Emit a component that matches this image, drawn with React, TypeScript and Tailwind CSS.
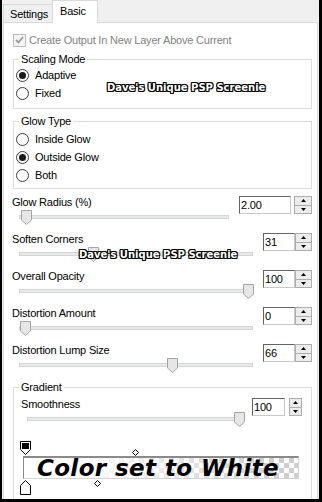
import React from "react";

const WM =
  "absolute font-['DejaVu_Sans',sans-serif] font-bold text-[10px] leading-[12px] tracking-normal text-white whitespace-nowrap [text-shadow:1px_0_0_#000,-1px_0_0_#000,0_1px_0_#000,0_-1px_0_#000,1px_1px_0_#000,-1px_-1px_0_#000,1px_-1px_0_#000,-1px_1px_0_#000]";

function Radio({ checked, label }: { checked?: boolean; label: string }) {
  return (
    <div className="flex items-center h-[18px] ml-[2px] gap-[6px]">
      <span className="w-[13px] h-[13px] rounded-full border border-[#3c3c3c] bg-white flex items-center justify-center">
        {checked && <span className="w-[7px] h-[7px] rounded-full bg-[#1a1a1a]" />}
      </span>
      <span>{label}</span>
    </div>
  );
}

function Thumb() {
  return (
    <svg width="11" height="15" viewBox="0 0 11 15">
      <path d="M0.5 0.5H10.5V10L5.5 14.5L0.5 10Z" fill="#e6e6e6" stroke="#a5a5a5" />
    </svg>
  );
}

function SpinBox({
  value,
  boxCls,
  gapCls,
  btnCls,
}: {
  value: string;
  boxCls: string;
  gapCls: string;
  btnCls: string;
}) {
  return (
    <div className="flex h-[18px]">
      <div
        className={`${boxCls} h-full bg-white border border-[#c8c8c8] border-t-[#646464] border-l-[#646464] text-[11px] leading-[16px] pl-[1px]`}
      >
        {value}
      </div>
      <div className={`${gapCls} ${btnCls} h-full flex flex-col border border-[#adadad]`}>
        <div className="flex-1 bg-[#ececec] border-b border-[#adadad] flex items-center justify-center">
          <svg width="5" height="3" viewBox="0 0 5 3">
            <path d="M0 3L2.5 0L5 3Z" fill="#000" />
          </svg>
        </div>
        <div className="flex-1 bg-[#ececec] flex items-center justify-center">
          <svg width="5" height="3" viewBox="0 0 5 3">
            <path d="M0 0L5 0L2.5 3Z" fill="#000" />
          </svg>
        </div>
      </div>
    </div>
  );
}

function SliderRow({
  label,
  value,
  thumb,
  boxCls,
  gapCls,
  btnCls,
  rowCls,
  trackCls,
}: {
  label: string;
  value: string;
  thumb: number;
  boxCls: string;
  gapCls: string;
  btnCls: string;
  rowCls: string;
  trackCls: string;
}) {
  return (
    <div className={`flex h-[37px] ${rowCls}`}>
      <div className="flex-1 flex flex-col">
        <div className="h-[14px] leading-[14px] whitespace-nowrap">{label}</div>
        <div className={`relative mt-[1px] h-[16px] flex flex-col ${trackCls}`}>
          <div className="mt-[5px] h-[4px] bg-[#e7eaea] border border-[#d6d6d6]" />
          <div className="absolute top-0" style={{ left: thumb }}>
            <Thumb />
          </div>
        </div>
      </div>
      <div className="ml-[10px] mt-[1px]">
        <SpinBox value={value} boxCls={boxCls} gapCls={gapCls} btnCls={btnCls} />
      </div>
    </div>
  );
}

export default function App() {
  return (
    <div className="relative w-[322px] h-[502px] bg-black pl-[2px] pr-[3px] pb-[3px] overflow-hidden font-['Liberation_Sans',Arial,sans-serif] text-[11px] tracking-[-0.2px] text-black">
      <div className="h-[499px] bg-[#f0f0f0] flex flex-col">
        {/* tabs */}
        <div className="h-[22px] flex items-end pl-[1px]">
          <div className="h-[18px] w-[50px] border border-b-0 border-[#d9d9d9] bg-[#f0f0f0] pl-[6px] leading-[18px]">
            Settings
          </div>
          <div className="relative z-10 -ml-[1px] -mb-[1px] h-[23px] w-[46px] border border-b-0 border-[#d9d9d9] bg-white pl-[7px] leading-[20px]">
            Basic
          </div>
        </div>
        {/* panel */}
        <div className="flex-1 ml-[1px] mr-[1px] bg-white border border-b-0 border-[#d9d9d9] flex flex-col">
          {/* checkbox */}
          <div className="mt-[9px] h-[16px] flex items-center ml-[9px] gap-[3px] text-[#838383]">
            <span className="w-[13px] h-[13px] border border-[#bcbcbc] bg-[#f4f4f4] flex items-center justify-center">
              <svg width="9" height="8" viewBox="0 0 9 8">
                <path d="M1 4L3.5 6.5L8 1" fill="none" stroke="#9a9a9a" strokeWidth="1.8" />
              </svg>
            </span>
            <span>Create Output In New Layer Above Current</span>
          </div>
          {/* scaling mode */}
          <fieldset className="mt-[4px] ml-[9px] mr-[5px] border border-[#dcdcdc] pt-[0px] pb-[6px]">
            <legend className="ml-[5px] px-[2px] leading-[14px]">Scaling Mode</legend>
            <Radio checked label="Adaptive" />
            <Radio label="Fixed" />
          </fieldset>
          {/* glow type */}
          <fieldset className="mt-[5px] ml-[9px] mr-[5px] border border-[#dcdcdc] pt-[2px] pb-[4px]">
            <legend className="ml-[5px] px-[2px] leading-[14px]">Glow Type</legend>
            <Radio label="Inside Glow" />
            <Radio checked label="Outside Glow" />
            <Radio label="Both" />
          </fieldset>
          {/* sliders */}
          <div className="mt-[6px] flex flex-col">
            <SliderRow
              label="Glow Radius (%)"
              value="2.00"
              thumb={2}
              rowCls="pl-[8px] pr-[5px]"
              trackCls="ml-[7px]"
              boxCls="w-[52px]"
              gapCls="ml-[3px]"
              btnCls="w-[18px]"
            />
            <SliderRow
              label="Soften Corners"
              value="31"
              thumb={69}
              rowCls="pl-[8px] pr-[5px]"
              trackCls="ml-[7px]"
              boxCls="w-[32px]"
              gapCls="ml-[0px]"
              btnCls="w-[17px]"
            />
            <SliderRow
              label="Overall Opacity"
              value="100"
              thumb={224}
              rowCls="pl-[8px] pr-[5px]"
              trackCls="ml-[7px]"
              boxCls="w-[32px]"
              gapCls="ml-[0px]"
              btnCls="w-[17px]"
            />
            <SliderRow
              label="Distortion Amount"
              value="0"
              thumb={1}
              rowCls="pl-[8px] pr-[5px]"
              trackCls="ml-[7px]"
              boxCls="w-[32px]"
              gapCls="ml-[0px]"
              btnCls="w-[17px]"
            />
            <SliderRow
              label="Distortion Lump Size"
              value="66"
              thumb={148}
              rowCls="pl-[8px] pr-[5px]"
              trackCls="ml-[7px]"
              boxCls="w-[32px]"
              gapCls="ml-[0px]"
              btnCls="w-[17px]"
            />
          </div>
          {/* gradient */}
          <fieldset className="flex-1 ml-[9px] mr-[5px] border border-b-0 border-[#dcdcdc] pt-[3px]">
            <legend className="ml-[5px] px-[2px] leading-[14px]">Gradient</legend>
            <SliderRow
              label="Smoothness"
              value="100"
              thumb={207}
              rowCls="pl-[7px] pr-[9px]"
              trackCls="ml-[6px]"
              boxCls="w-[33px]"
              gapCls="ml-[4px]"
              btnCls="w-[13px]"
            />
            <div className="relative ml-[9px] mr-[12px] h-[62px] flex flex-col">
              <div className="mt-[22px] h-[23px] border-t-[2px] border-l border-t-[#8a8a8a] border-l-[#8a8a8a] border-r border-b border-r-[#d4d4d4] border-b-[#d4d4d4] bg-[repeating-conic-gradient(#cfcfcf_0%_25%,#ffffff_0%_50%)] [background-size:10px_10px]">
                <div className="h-full pr-[6px] bg-[linear-gradient(to_right,#ffffff_15%,rgba(255,255,255,0)_90%)] flex items-center justify-center font-['DejaVu_Sans',sans-serif] font-bold italic text-[23px] leading-[21px] tracking-[0.4px] whitespace-nowrap">
                  Color set to White
                </div>
              </div>
              <div className="absolute left-[-3px] top-[7px]">
                <svg width="11" height="14" viewBox="0 0 11 14">
                  <path d="M0.5 0.5H10.5V8.5L5.5 13.5L0.5 8.5Z" fill="#fff" stroke="#000" />
                  <rect x="2" y="2" width="7" height="6" fill="#000" />
                </svg>
              </div>
              <div className="absolute left-[109px] top-[15px]">
                <svg width="7" height="7" viewBox="0 0 7 7">
                  <path d="M3.5 0.5L6.5 3.5L3.5 6.5L0.5 3.5Z" fill="#fff" stroke="#000" />
                </svg>
              </div>
              <div className="absolute left-[71px] top-[46px]">
                <svg width="7" height="7" viewBox="0 0 7 7">
                  <path d="M3.5 0.5L6.5 3.5L3.5 6.5L0.5 3.5Z" fill="#fff" stroke="#000" />
                </svg>
              </div>
              <div className="absolute left-[-3px] top-[46px]">
                <svg width="11" height="15" viewBox="0 0 11 15">
                  <path d="M5.5 0.5L10.5 5.5V14.5H0.5V5.5Z" fill="#fff" stroke="#000" />
                </svg>
              </div>
            </div>
          </fieldset>
        </div>
      </div>
      <div className={`${WM} left-[107px] top-[82px]`}>Dave's Unique PSP Screenie</div>
      <div className={`${WM} left-[79px] top-[249px]`}>Dave's Unique PSP Screenie</div>
    </div>
  );
}
